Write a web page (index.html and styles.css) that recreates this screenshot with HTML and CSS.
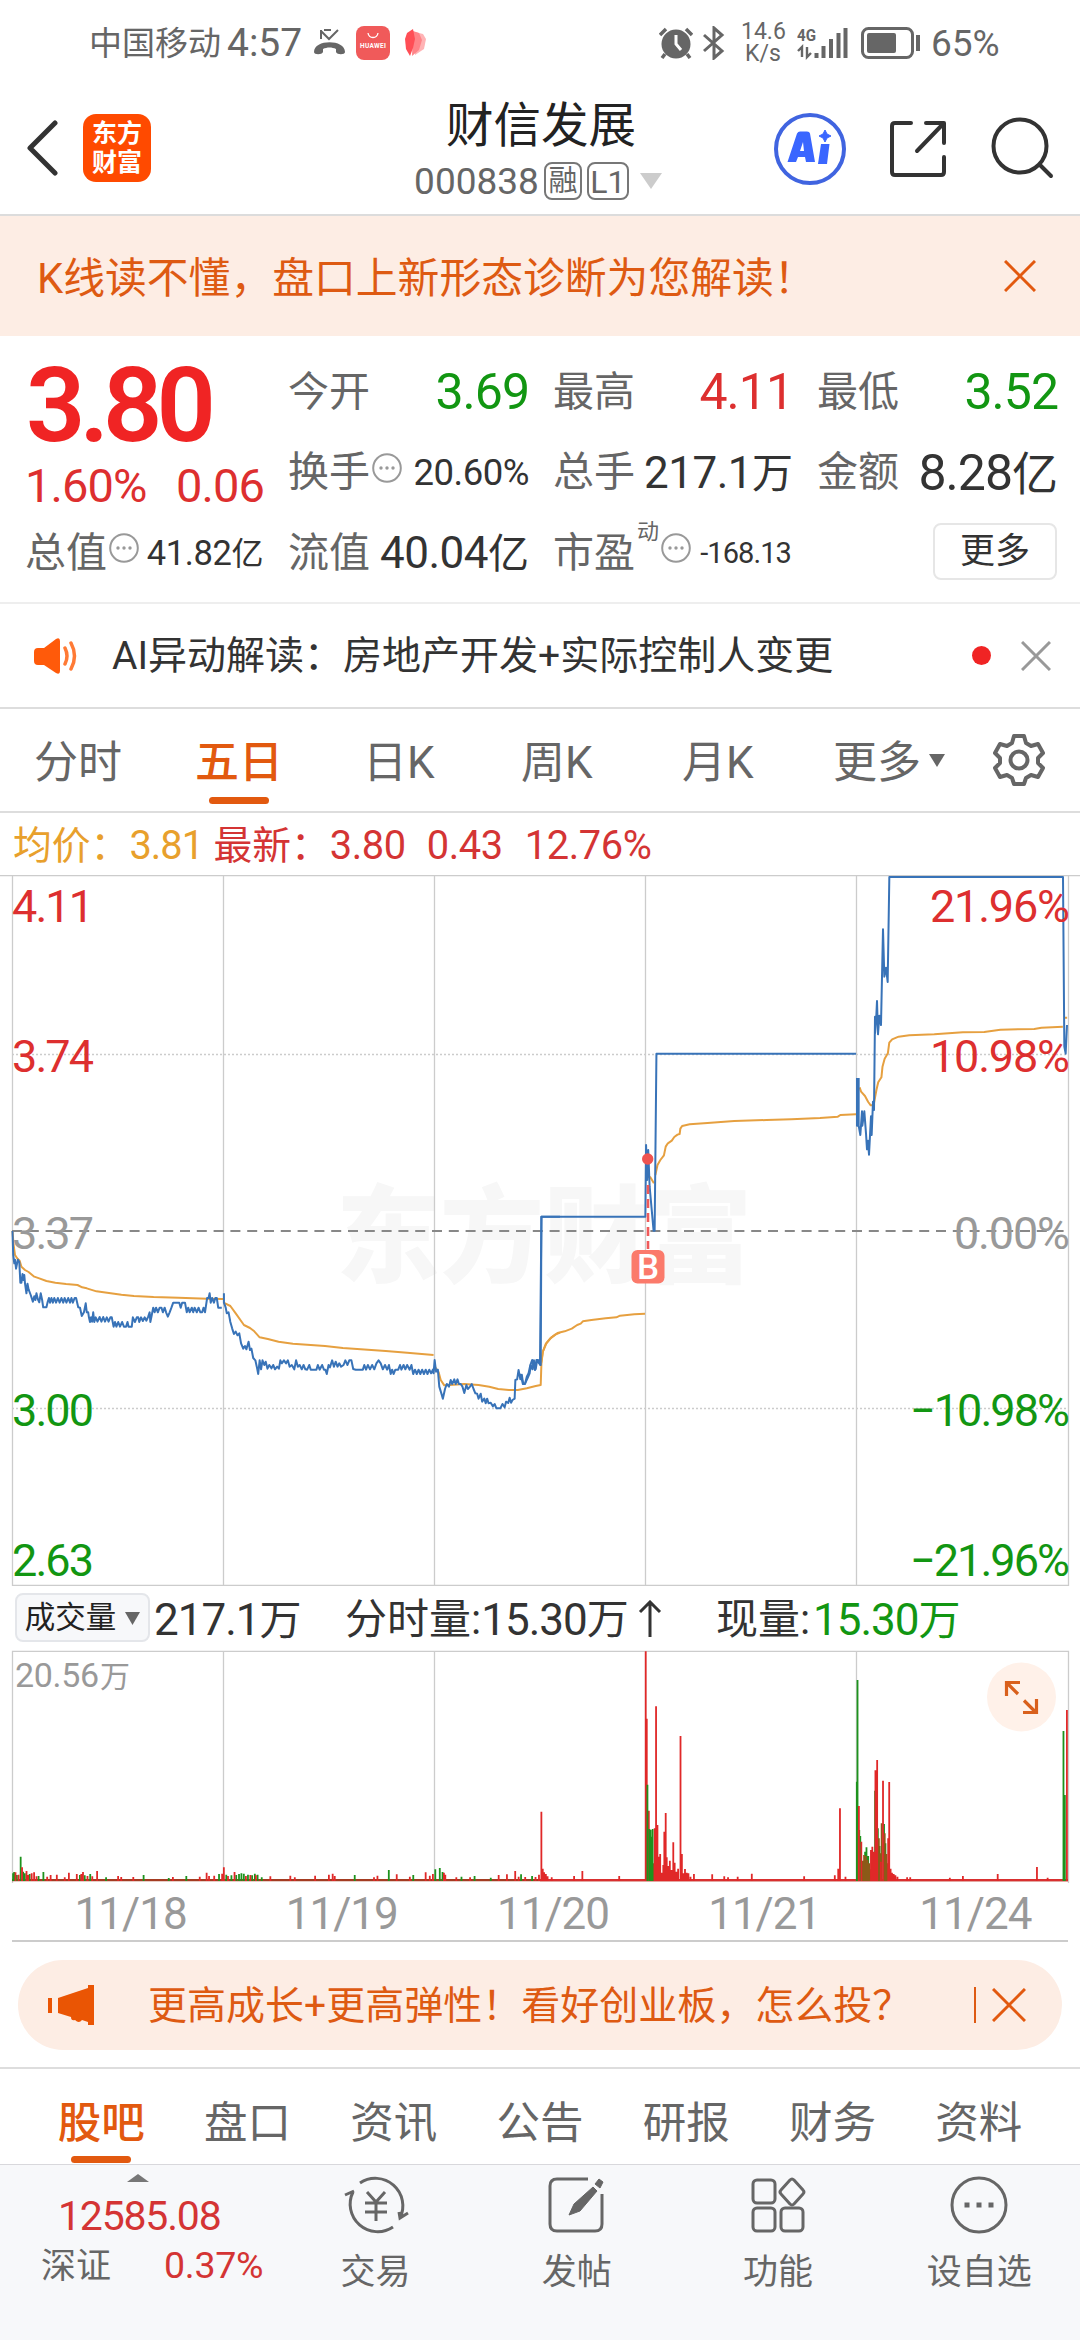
FILE: index.html
```html
<!DOCTYPE html>
<html lang="zh-CN">
<head>
<meta charset="utf-8">
<title>财信发展 000838</title>
<link rel="stylesheet" href="styles.css">
</head>
<body>
<div class="status">
  <span class="carrier">中国移动</span><span class="clock">4:57</span>
  <svg class="st-call" width="34" height="30" viewBox="0 0 34 30" fill="none" stroke="#666"><path d="M8 2v9M8 3l8 8L25 2M11 2h7" stroke-width="2"/><path d="M1 24c0-13 31-13 31 0 0 3-8 3-9 0v-3c-4-2-9-2-13 0v3c-1 3-9 3-9 0z" fill="#666" stroke="none"/></svg>
  <svg class="st-hw" width="34" height="34" viewBox="0 0 34 34"><rect width="34" height="34" rx="8" fill="#f05a5a"/><path d="M12 7c1 6 9 6 10 0" fill="none" stroke="#fff" stroke-width="1.3"/><text x="4" y="22" textLength="26" font-size="6.5" font-weight="700" fill="#fff">HUAWEI</text></svg>
  <svg class="st-petal" width="21" height="28" viewBox="0 0 21 28"><path d="M10 3l8 2 3 5-2 10-9 6z" fill="#ffb3b5"/><path d="M8 2l6 2 3 7-3 10-7 6z" fill="#ff8488"/><path d="M8 0l2 10-2 9-3 8-4-7-1-10 2-6z" fill="#ff4e55"/></svg>
  <span class="grow"></span>
  <svg class="st-alarm" width="34" height="32" viewBox="0 0 34 32"><circle cx="17" cy="17" r="14.5" fill="#666"/><path d="M1 8l6-6M33 8l-6-6M6 27l-3 4M28 27l3 4" stroke="#666" stroke-width="3.5"/><path d="M17 8v9l5 6" fill="none" stroke="#fff" stroke-width="3"/></svg>
  <svg class="st-bt" width="22" height="34" viewBox="0 0 22 34" fill="none" stroke="#666" stroke-width="3"><path d="M1 9l18 16-8 7V2l8 7L1 25"/></svg>
  <span class="speed"><span>14.6</span><span>K/s</span></span>
  <svg class="st-signal" width="52" height="34" viewBox="0 0 52 34"><text x="0" y="15" textLength="19" lengthAdjust="spacingAndGlyphs" font-size="17" font-weight="700" fill="#666">4G</text><path d="M5 31V21L1 25M10 21v10l4-4" fill="none" stroke="#666" stroke-width="2.4"/><path d="M19.500 32v-5M26.500 32V20M34 32V13M41.500 32V7M48.500 32V2" stroke="#666" stroke-width="4"/></svg>
  <svg class="st-batt" width="60" height="32" viewBox="0 0 60 32"><rect x="1.500" y="1.500" width="50" height="29" rx="6" fill="none" stroke="#666" stroke-width="3"/><rect x="6" y="6" width="29" height="20" rx="2" fill="#666"/><path d="M57 8v16" stroke="#666" stroke-width="4"/></svg>
  <span class="pct">65%</span>
</div>

<header class="header">
  <svg class="back" width="33" height="56" viewBox="0 0 33 56" fill="none" stroke="#333" stroke-width="5" stroke-linecap="round" stroke-linejoin="round"><path d="M29 3L4 28l25 25"/></svg>
  <div class="logo">东方<br>财富</div>
  <div class="title">
    <div class="name">财信发展</div>
    <div class="code"><span>000838</span><i class="tag">融</i><i class="tag tag-l">L1</i><svg width="22" height="16" viewBox="0 0 22 16"><path d="M0 0h22L11 16z" fill="#ccc"/></svg></div>
  </div>
  <div class="actions">
    <svg width="72" height="72" viewBox="0 0 72 72"><circle cx="36" cy="36" r="34" fill="none" stroke="#4064e0" stroke-width="4"/><path fill-rule="evenodd" fill="#3a66ff" d="M13.500 49L23 20.500q1-2 3-2h7q2.500 0 3 2L41 49h-9l-1-5h-7l-2 5zM26 38h4l-1-9z"/><path d="M47 31h8.500L53 51h-9z" fill="#3a66ff"/><path d="M51 17l2 4 4 2-4 2-2 4-2-4-4-2 4-2z" fill="#3a66ff" stroke="#3a66ff"/></svg>
    <svg width="58" height="58" viewBox="0 0 58 58" fill="none" stroke="#333" stroke-width="4" stroke-linecap="round" stroke-linejoin="round"><path d="M22 3H6q-3 0-3 3v46q0 3 3 3h46q3 0 3-3V37M37 3h18v20M54 4L28 31"/></svg>
    <svg width="64" height="64" viewBox="0 0 64 64" fill="none" stroke="#333" stroke-width="4" stroke-linecap="round"><circle cx="30" cy="29" r="26.500"/><path d="M50 48l11 11"/></svg>
  </div>
</header>

<div class="banner"><span>K线读不懂，盘口上新形态诊断为您解读！</span><svg width="32" height="32" viewBox="0 0 32 32" stroke="#e2590f" stroke-width="3"><path d="M1 1l30 30M31 1L1 31"/></svg></div>

<section class="quote">
  <div class="cell price">3.80</div>
  <div class="cell"><label>今开</label><b class="xl green">3.69</b></div>
  <div class="cell"><label>最高</label><b class="xl red">4.11</b></div>
  <div class="cell"><label>最低</label><b class="xl green">3.52</b></div>
  <div class="cell change"><b>1.60%</b><b>0.06</b></div>
  <div class="cell"><label>换手<svg class="more" viewBox="0 0 30 30"><use href="#dots"/></svg></label><b class="md">20.60%</b></div>
  <div class="cell"><label>总手</label><b class="lg">217.1<u>万</u></b></div>
  <div class="cell"><label>金额</label><b class="xl">8.28<u>亿</u></b></div>
  <div class="cell"><label>总值<svg class="more" viewBox="0 0 30 30"><g id="dots"><circle cx="15" cy="15" r="13.800" fill="none" stroke="#999" stroke-width="2"/><circle cx="9" cy="15" r="1.700" fill="#999"/><circle cx="15" cy="15" r="1.700" fill="#999"/><circle cx="21" cy="15" r="1.700" fill="#999"/></g></svg></label><b class="sm">41.82<u>亿</u></b></div>
  <div class="cell"><label>流值</label><b class="lg">40.04<u>亿</u></b></div>
  <div class="cell"><label>市盈<sup>动</sup><svg class="more" viewBox="0 0 30 30"><use href="#dots"/></svg></label><b class="xs">-168.13</b></div>
  <div class="cell end"><button>更多</button></div>
</section>

<div class="notice">
  <svg width="44" height="36" viewBox="0 0 44 36"><path d="M4 10h6L22 1q4-2 4 2v30q0 4-4 2L10 27H4q-4 0-4-4v-9q0-4 4-4z" fill="#ff5a0a"/><path d="M31 10q4 8 0 16M37 5q7 13 0 26" fill="none" stroke="#ff7a35" stroke-width="3.500" stroke-linecap="round"/></svg>
  <span class="msg">AI异动解读：房地产开发+实际控制人变更</span><i class="dot"></i>
  <svg width="30" height="30" viewBox="0 0 30 30" stroke="#999" stroke-width="3"><path d="M1 1l28 28M29 1L1 29"/></svg>
</div>

<nav class="periods">
  <a>分时</a><a class="on">五日</a><a>日K</a><a>周K</a><a>月K</a><a>更多<svg width="16" height="13" viewBox="0 0 16 13"><path d="M0 0h16L8 13z" fill="#666"/></svg></a>
  <svg class="gear" width="52" height="54" viewBox="-26 -27 52 54" fill="none" stroke="#666" stroke-width="4" stroke-linejoin="round"><path d="M-5-24H5L7-17 12-14 19-16 24-7 19-2V3L24 8 19 17 12 15 7 18 5 24H-5L-7 18-12 15-19 17-24 8-19 3V-2L-24-7-19-16-12-14-7-17z"/><circle r="8.500"/></svg>
</nav>

<div class="legend"><span class="avg">均价：</span><b class="avg n1">3.81</b><span>最新：</span><b class="n2">3.80</b><b class="n3">0.43</b><b>12.76%</b></div>

<svg class="chart" width="1080" height="711" viewBox="0 875 1080 711">
  <text x="336" y="1274" class="mark" textLength="416" lengthAdjust="spacingAndGlyphs">东方财富</text>
  <g fill="none" stroke="#ccc" stroke-width="1.300">
    <path d="M0 875.700H1080M12.500 876V1585.500H1068.500V876M223.500 876V1585M434.500 876V1585M645.500 876V1585M856.500 876V1585"/>
    <path d="M12 1054.500H1068M12 1408.500H1068" stroke-dasharray="2 2"/>
  </g>
  <path d="M12 1231H1068" stroke="#888" stroke-width="2" stroke-dasharray="10 6.800"/>
  <g fill="none" stroke="#e6a040" stroke-width="2" stroke-linejoin="round">
    <g transform="translate(0 1200) scale(.35714 .33333)"><path vector-effect="non-scaling-stroke" d="M35 93L38 135 42 165 48 175 55 182 60 200 70 210 80 216 96 230 110 235 130 243 155 248 185 252 217 255 230 262 243 265 270 274 300 278 340 284 375 288 430 291 500 293 580 296 625 297M626 308L645 318 660 340 683 375 700 384 712 394 727 412 750 417 780 425 820 431 860 434 910 438 960 444 1010 448 1080 453 1140 458 1214 465M1217 500L1228 516 1234 540 1244 556 1270 554 1300 552 1340 555 1370 560 1395 567 1425 570 1450 570 1475 565 1500 558 1514 555 1516 490 1520 455 1528 432 1540 416 1555 404 1568 398"/></g>
    <g transform="translate(520 1000) scale(.35714 .33333)"><path vector-effect="non-scaling-stroke" d="M59 1090L64 1055 74 1030 88 1012 105 999 125 994 145 986 160 975 170 971 176 964 200 960 240 955 270 952 280 947 320 943 350 941M358 530L365 532 375 550M379 525L385 495 393 480 403 466 408 440 414 430 425 422 432 411 441 404 447 402 449 386 454 378 475 373 525 369 600 363 690 360 760 358 840 354 890 350 897 345 941 343M951 262L955 275 966 288 975 306 982 316 990 316 998 270 1003 247 1012 232 1015 200 1021 176 1030 160 1034 128 1042 118 1060 110 1090 106 1160 103 1240 97 1300 96 1345 89 1440 87 1460 83 1520 80M1523 53H1532"/></g>
  </g>
  <g fill="none" stroke="#3873b8" stroke-width="2" stroke-linejoin="round">
    <g transform="translate(0 1200) scale(.35714 .33333)"><path vector-effect="non-scaling-stroke" d="M35 93L37 165 40 190 42 179 45 206 50 179 54 186 57 248 60 248 63 222 66 240 68 225 70 250 74 280 77 251 80 268 86 285 92 305 96 289 99 300 102 280 106 298 110 307 114 280 118 300 121 322H130L133 308 137 294 140 308 144 294 148 308 152 294 157 308 162 294 167 308 172 294 177 308 181 294 186 308 191 294 196 308 200 294 204 308 209 294 213 294 219 322 224 323 229 348 235 337 240 310 243 337 247 337 249 352 252 366 255 352 258 365 261 337 264 366 268 352 273 365 279 351 284 365 289 351 294 365 299 352 304 365 309 352 313 352 318 380 322 366 326 380 331 366 336 380 342 366 347 380H353L357 366 360 380 369 380 372 352 378 366 383 352 387 352 390 366 395 352 400 363 405 352 410 362 415 350 419 337 421 366 425 345 429 323 433 337 437 323 442 337 447 323 452 323 456 337 461 323 465 337 470 350 475 337 480 323 485 308H502L506 323 510 308H518L523 337 527 323 531 337 537 323 541 337 545 323 551 337 556 323 561 337 566 337 570 323 574 337 580 294 584 294 587 280 590 308 594 294 599 308 603 294 607 294 611 323H621M627 280V308L632 323 635 340 640 337 645 366 650 385 655 402 660 395 665 406 670 400 675 430 681 446 686 438 690 448 696 425 700 450 704 446 709 474 715 481 719 500 723 522 727 481 731 508 735 481 740 495 744 485 749 506 754 495 760 505 765 495 770 508 776 500 781 506 785 481 789 490 795 481 801 490 806 481 811 500 817 495 824 508 829 481 834 500 839 495 845 508 850 495 855 508 860 509 866 495 870 509H886L890 495 895 509 902 495 907 509 911 509 915 522 920 495 924 502 930 481 935 500 940 485 945 500 950 490 955 500 962 495 967 481 973 495 978 481 984 481 989 507 996 509H1016L1020 495 1025 509 1030 495 1036 508 1042 495 1048 508 1054 490 1060 481 1066 490 1072 508 1078 495 1084 509 1089 495 1094 522 1098 509 1102 522 1107 509 1115 509 1120 495 1124 509 1130 495 1135 508 1140 495 1147 509 1152 495 1157 522 1162 509 1167 522 1172 509 1177 522 1182 509 1187 522 1192 509 1197 522 1202 509 1207 520 1212 509 1214 520 1217 480 1221 515 1226 509 1230 560 1236 581 1240 596 1246 567 1251 552 1257 560 1262 540 1266 552 1272 538 1276 552 1281 538 1285 552 1290 552 1295 560 1300 579 1306 555 1310 567 1316 560 1321 552 1326 567 1331 580 1336 581 1340 596 1346 581 1350 605 1356 596 1360 610 1364 596 1368 610 1374 608 1380 619 1385 612 1390 625 1401 625 1407 612 1413 622 1417 605 1423 609 1427 593 1431 608 1435 600 1441 596 1443 540 1448 538 1452 510 1457 538 1461 524 1465 552 1470 551 1477 535 1483 520 1486 495 1491 508 1495 481 1500 507 1504 481 1510 490 1514 495 1516 50H1568"/></g>
    <g transform="translate(520 1000) scale(.35714 .33333)"><path vector-effect="non-scaling-stroke" d="M0 1122L4 1132 8 1152 14 1152 19 1130 24 1120 29 1095 34 1080 38 1100 42 1110 46 1080 51 1080 56 1094 60 650H351L353 435 356 540 359 450 363 560 368 620 374 692H377L382 161H941"/></g>
    <g transform="translate(780 860) scale(.33333)"><path vector-effect="non-scaling-stroke" d="M231 654V797H236V654M236 797L241 825 246 754 247 797 253 754 258 820 261 868 264 842 267 884 273 769 275 825 279 725 282 750 285 470V520L289 467 291 423 294 523 298 467 303 495 309 208 313 350 318 323 323 366 328 51H849L853 560 857 581 861 495"/></g>
  </g>
  <g><path d="M648 1185V1249" stroke="#f05a5a" stroke-width="2.600" stroke-dasharray="9 5"/><circle cx="647.700" cy="1159" r="5.700" fill="#ef5350"/><rect x="631.500" y="1250" width="33" height="33.500" rx="6" fill="#fb7a6b"/><text x="648" y="1279" text-anchor="middle" font-size="35" font-weight="500" fill="#fff">B</text></g>
  <g class="axis">
    <text x="12" y="922" textLength="82" class="r">4.11</text><text x="12" y="1071.500" textLength="82" class="r">3.74</text><text x="12" y="1248.500" textLength="82" class="g">3.37</text><text x="12" y="1425.500" textLength="82" class="d">3.00</text><text x="12" y="1576" textLength="82" class="d">2.63</text>
    <text x="930" y="922" textLength="140" class="r">21.96%</text><text x="930" y="1071.500" textLength="140" class="r">10.98%</text><text x="954" y="1248.500" textLength="116" class="g">0.00%</text><text x="910" y="1425.500" textLength="160" class="d">−10.98%</text><text x="910" y="1576" textLength="160" class="d">−21.96%</text>
  </g>
</svg>

<div class="volbar"><button class="pick">成交量<svg width="15" height="13" viewBox="0 0 15 13"><path d="M0 0h15L7.500 13z" fill="#666"/></svg></button><b class="v1">217.1<u>万</u></b><span class="v2">分时量:<b>15.30</b>万<svg width="24" height="38" viewBox="0 0 24 38" fill="none" stroke="#333" stroke-width="3"><path d="M12 37V2M2 12L12 2l10 10"/></svg></span><span class="v3">现量:</span><b class="green v4">15.30<u>万</u></b></div>

<svg class="chart" width="1080" height="234" viewBox="0 1650 1080 234">
  <path d="M12.500 1883V1651.300H1068.500V1883M223.500 1651V1881M434.500 1651V1881M645.500 1651V1881M856.500 1651V1881" fill="none" stroke="#ccc" stroke-width="1.300"/>
  <g class="axis g"><text x="15" y="1687" textLength="84" class="vmax">20.56</text><text x="100" y="1687" class="vmaxu">万</text></g>
  <path d="M12 1880.200H1068" stroke="#a33c22" stroke-width="2.200"/><path d="M540 1880.200H1068" stroke="#d83030" stroke-width="2.200"/>
  <g stroke-width="1.800">
    <g transform="translate(0 1580) scale(.34439 .33333)">
      <path class="dn" vector-effect="non-scaling-stroke" d="M38 903V880M41 903V876M49 903V885M60 903V830M67 903V875M72 903V880M86 903V882M112 903V888M126 903V876M232 903V885M246 903V886M262 903V882M308 903V892M417 903V885M490 903V894M541 903V888M636 903V882M657 903V884M672 903V886M686 903V885M694 903V882M701 903V880M708 903V881M720 903V884M732 903V886M740 903V881M748 903V884M760 903V892M1030 903V885M1129 903V870M1200 903V885M1264 903V868M1277 903V864M1285 903V876M1340 903V890M1378 903V888M1425 903V893M1513 903V883M1545 903V888"/>
      <path class="up" vector-effect="non-scaling-stroke" d="M45 903V877M54 903V884M64 903V862M77 903V873M82 903V885M92 903V880M99 903V877M106 903V889M137 903V890M147 903V885M165 903V884M188 903V892M200 903V878M223 903V882M236 903V882M241 903V876M254 903V888M268 903V889M282 903V873M343 903V888M352 903V891M387 903V891M502 903V891M580 903V890M600 903V878M607 903V888M622 903V887M645 903V881M650 903V862M662 903V888M681 903V876M714 903V888M727 903V885M743 903V886M785 903V889M843 903V887M856 903V892M915 903V887M955 903V884M966 903V881M972 903V888M1086 903V892M1096 903V887M1152 903V883M1190 903V890M1236 903V877M1248 903V887M1257 903V882M1289 903V878M1293 903V884M1325 903V892M1365 903V892M1448 903V885M1472 903V883M1496 903V873M1506 903V890M1525 903V891M1555 903V891M1565 903V884"/>
    </g>
    <g transform="translate(540 1580) scale(.34439 .33333)">
      <path class="up" vector-effect="non-scaling-stroke" d="M4 903V695M8 903V866M12 903V877M17 903V882M22 903V889M34 903V892M99 903V888M123 903V873M230 903V888M307 903V214M310 903V416M316 903V692M330 903V850M333 903V745M337 903V379M341 903V735M345 903V830M349 903V822M354 903V878M358 903V855M361 903V755M365 903V699M368 903V832M373 903V858M377 903V842M382 903V870M387 903V787M391 903V848M396 903V875M401 903V866M408 903V468M412 903V822M416 903V880M421 903V867M426 903V878M431 903V880M437 903V890M447 903V882M500 903V883M535 903V889M546 903V892M574 903V890M615 903V881M767 903V889M856 903V886M866 903V866M871 903V685M887 903V890"/>
      <path class="dn" vector-effect="non-scaling-stroke" d="M312 903V614M318 903V747M321 903V750M324 903V770M327 903V747M920 903V605M922 903V300M927 903V750M930 903V768M944 903V815M948 903V802M953 903V828M973 903V632M981 903V745M986 903V798M999 903V732M1003 903V790M1520 903V453M1524 903V645"/>
      <path class="mix" vector-effect="non-scaling-stroke" d="M925 903V750M936 903V842M941 903V825M946 903V828M951 903V840M956 903V850M961 903V868M965 903V855M976 903V760M984 903V775M988 903V820M992 903V730M1001 903V760M1006 903V822M1009 903V850"/>
      <path class="up" vector-effect="non-scaling-stroke" d="M926 903V678M933 903V785M961 903V810M965 903V800M969 903V815M974 903V571M979 903V540M990 903V845M996 903V602M1011 903V775M1014 903V606M1018 903V866M1022 903V878M1027 903V882M1032 903V886M1038 903V890M1066 903V892M1075 903V892M1190 903V893M1228 903V888M1329 903V882M1443 903V861M1474 903V893M1530 903V390"/>
    </g>
  </g>
  <circle cx="1021.500" cy="1697" r="34.500" fill="#fff1e9"/><path d="M1006.500 1696V1682.500H1020M1007 1683L1018 1694M1024 1700.500L1036 1712.500M1023 1712.500H1036.500V1699" fill="none" stroke="#d9601c" stroke-width="3.200"/>
</svg>

<div class="dates"><span>11/18</span><span>11/19</span><span>11/20</span><span>11/21</span><span>11/24</span></div>

<div class="promo">
  <svg width="46" height="40" viewBox="0 0 46 40"><path d="M0 13h4v15H0zM10 13L40 3V0h6v40h-6v-3l-6-2q-3 4-7 0-4 1-4-3l-13-4z" fill="#ea5504"/></svg>
  <span>更高成长+更高弹性！看好创业板，怎么投？</span><i></i>
  <svg width="34" height="34" viewBox="0 0 34 34" stroke="#e2590f" stroke-width="3"><path d="M1 1l32 32M33 1L1 33"/></svg>
</div>

<nav class="sections"><a class="on">股吧</a><a>盘口</a><a>资讯</a><a>公告</a><a>研报</a><a>财务</a><a>资料</a></nav>

<footer class="footer">
  <div class="index"><svg width="22" height="8" viewBox="0 0 22 8"><path d="M11 0l11 8H0z" fill="#777"/></svg><b class="pts">12585.08</b><div><span>深证</span><b>0.37%</b></div></div>
  <a><svg viewBox="0 0 66 58"><path d="M17 7A27.500 27.500 0 0 1 57 42M50 51A27.500 27.500 0 0 1 10 16M2 19l9-4M65 37l-8 5-1-6M24 16l9 10 9-10M33 26v19M22 27h22M22 36h22"/></svg>交易</a>
  <a><svg viewBox="0 0 66 58"><path d="M44 3H13q-7 0-7 7v38q0 7 7 7h38q7 0 7-7V18" /><path d="M55 3l4 3-3 6-5-4zM49 11l4 4-17 20-11 4 5-11z" fill="#666" stroke-width="1"/></svg>发帖</a>
  <a><svg viewBox="0 0 66 58"><rect x="8" y="4" width="22" height="23" rx="4"/><rect x="8" y="32" width="22" height="23" rx="4"/><rect x="36" y="32" width="22" height="23" rx="4"/><path d="M45 4q2-2 4 0l9 10q2 2 0 4l-9 10q-2 2-4 0l-9-10q-2-2 0-4z"/></svg>功能</a>
  <a><svg viewBox="0 0 66 58"><circle cx="33" cy="29" r="27"/><path d="M21 26.500v5M33 26.500v5M45 26.500v5" stroke-width="5"/></svg>设自选</a>
</footer>
</body>
</html>
```
FILE: styles.css
```css
* { box-sizing: border-box; }
body {
  margin: 0;
  width: 1080px;
  height: 2340px;
  overflow: hidden;
  display: flex;
  flex-direction: column;
  background: #fff;
  color: #333;
  font-family: Roboto, "Noto Sans CJK SC", sans-serif;
  line-height: 1;
  white-space: nowrap;
}
body > * { flex-shrink: 0; }
b { font-weight: 400; }
i { font-style: normal; }
u { text-decoration: none; }
svg { display: block; flex-shrink: 0; }
button { font: inherit; color: inherit; background: none; padding: 0; }
.green { color: #129612; }
.red { color: #dd2f2f; }
.grow { flex: 1; }

.status { height: 85px; padding: 0 80px 0 89px; display: flex; align-items: center; color: #666; }
.carrier { font-size: 33px; padding-top: 2px; }
.clock { font-size: 39px; margin-left: 6px; padding-top: 2px; }
.st-call { margin-left: 11px; }
.st-hw { margin-left: 9px; }
.st-petal { margin-left: 15px; }
.st-alarm { margin-right: 10px; }
.st-bt { margin-right: 16px; }
.speed { width: 44px; display: flex; flex-direction: column; font-size: 23px; line-height: 22px; text-align: center; }
.st-signal { margin-left: 12px; }
.st-batt { margin-left: 12px; }
.pct { width: 69px; margin-left: 10px; font-size: 37px; padding-top: 2px; }

.header { height: 131px; border-bottom: 2px solid #dcdcdc; display: flex; align-items: center; padding: 0 26px; }
.back { margin-top: -3px; }
.logo { width: 68px; height: 68px; margin: -3px 0 0 24px; padding-top: 5px; border-radius: 13px; background: #ff4a00; color: #fff; font-size: 25px; font-weight: 700; line-height: 29px; text-align: center; }
.title { flex: 1; margin: 5px 0 0 262px; display: flex; flex-direction: column; align-items: center; }
.name { font-size: 47.500px; color: #222; margin-left: 6px; }
.code { display: flex; align-items: center; height: 40px; margin-top: 10px; font-size: 37px; color: #666; }
.code span { padding-top: 2px; }
.tag { width: 38px; height: 38px; margin-left: 5px; border: 2px solid #777; border-radius: 8px; font-size: 29px; line-height: 34px; text-align: center; }
.tag-l { width: 42px; font-size: 32px; line-height: 36px; }
.code svg { margin-left: 11px; }
.actions { display: flex; align-items: center; gap: 43px; margin: -2px 0 0 111px; }

.banner { height: 120px; padding: 0 44px 0 37px; display: flex; align-items: center; justify-content: space-between; background: #fdede4; color: #de5a12; font-size: 41.800px; }
.banner span { padding-top: 5px; }

.quote { height: 268px; padding: 16px 25px 0 26px; border-bottom: 2px solid #eee; display: grid; grid-template-columns: 236px 238px 237px 238px; column-gap: 27px; grid-template-rows: repeat(3, 80.500px); }
.cell { display: flex; align-items: center; justify-content: space-between; }
.cell label { display: flex; align-items: center; font-size: 41px; color: #666; margin-left: -1px; }
.cell b { margin-right: -2px; }
.price { color: #f02424; font-size: 104px; font-weight: 600; letter-spacing: -6px; line-height: 80px; padding-top: 28px; }
.change { color: #dd2f2f; font-size: 47px; letter-spacing: -.900px; padding-top: 26px; }
.change b:first-child { margin-left: -1px; }
.more { width: 30px; height: 30px; margin: -10px 0 0 2px; }
.xl { font-size: 50px; letter-spacing: -1px; }
.xl u { font-size: 46px; letter-spacing: 0; }
.lg { font-size: 44px; letter-spacing: -.5px; }
.lg u { font-size: 41px; letter-spacing: 0; }
.md { font-size: 36.500px; letter-spacing: -.5px; }
.cell .sm { font-size: 34.500px; letter-spacing: -.4px; margin-right: -1px; }
.sm u { font-size: 32px; }
.cell .xs { font-size: 29px; letter-spacing: -.9px; margin-right: 0; }
.cell sup { font-size: 22px; line-height: 22px; margin: -42px 0 0 2px; vertical-align: baseline; }
.cell.end { justify-content: flex-end; }
.cell button { width: 124px; height: 57px; margin: -3px -1px 0 0; border: 2px solid #e6e6e6; border-radius: 8px; font-size: 35px; }

.notice { height: 105px; border-bottom: 2px solid #ddd; padding: 0 29px 0 34px; display: flex; align-items: center; }
.msg { font-size: 39px; flex: 1; margin-left: 34px; padding-top: 2px; }
.dot { width: 19px; height: 19px; border-radius: 50%; background: #f02424; margin-right: 30px; }

.periods { height: 104px; border-bottom: 2px solid #ddd; padding-left: 34px; display: grid; grid-template-columns: 161px 168px 158px 161px 151px 160px 52px; align-items: center; justify-items: start; color: #666; font-size: 44px; }
.periods a, .sections a { position: relative; display: flex; align-items: center; height: 100%; }
.periods a { padding-top: 5px; }
.periods a svg { margin: -5px 0 0 8px; }
.on { color: #e2590f; font-weight: 500; }
.on::after { content: ""; position: absolute; left: 50%; bottom: 7px; width: 60px; height: 7px; margin-left: -30px; border-radius: 4px; background: #e2590f; }

.legend { height: 62px; padding: 4px 0 0 13px; display: flex; align-items: center; color: #d43434; font-size: 38.800px; }
.legend b { font-size: 39.800px; letter-spacing: -.4px; }
.legend .n1 { width: 84px; letter-spacing: -1px; }
.avg { color: #e8a02c; }
.n2 { width: 97px; }
.n3 { width: 98px; }

.chart text { font-family: Roboto, "Noto Sans CJK SC", sans-serif; }
.chart .mark { font-size: 106px; font-weight: 800; fill: #f7f7f7; }
.axis { font-size: 45px; }
.r { fill: #dd2f2f; }
.g { fill: #999; }
.d { fill: #129612; }
.vmax { font-size: 34px; }
.vmaxu { font-size: 30px; }
.up { stroke: #e02828; }
.dn { stroke: #1d921d; }
.mix { stroke: #8b5a18; }

.volbar { height: 64px; padding: 4px 0 0 15px; display: flex; align-items: center; font-size: 42px; }
.volbar b { font-size: 44px; letter-spacing: -1px; }
.volbar u { font-size: 42px; letter-spacing: 0; }
.volbar .pick { width: 135px; height: 49px; margin-top: -5px; padding-top: 1px; border: 2px solid #e4e6ea; border-radius: 8px; background: #f7f8fa; font-size: 30.500px; display: flex; align-items: center; justify-content: center; gap: 9px; color: #222; }
.v1 { width: 191px; margin-left: 4px; }
.v2 { width: 371px; display: flex; align-items: center; }
.v2 svg { margin: -3px 0 0 9px; }
.v3 { width: 97px; }

.dates { height: 58px; margin: 0 12px; padding-top: 3px; border-bottom: 2px solid #ccc; display: grid; grid-template-columns: repeat(5, 1fr); align-items: center; text-align: center; color: #999; font-size: 44px; letter-spacing: -1px; }
.dates span { padding-left: 26px; }

.promo { height: 90px; margin: 18px 18px 17px; padding: 0 36px 0 30px; border-radius: 45px; background: #fdede4; display: flex; align-items: center; color: #de5a12; font-size: 39px; }
.promo span { flex: 1; margin-left: 54px; padding-top: 2px; }
.promo i { width: 2px; height: 36px; background: #de5a12; margin-right: 16px; }

.sections { height: 98px; padding: 0 28px; border-top: 2px solid #ddd; border-bottom: 1px solid #d8d8dc; display: grid; grid-template-columns: repeat(7, 1fr); justify-items: center; color: #666; font-size: 43.500px; }
.sections a { padding-top: 15px; }
.sections .on::after { bottom: 1px; }

.footer { flex: 1; display: grid; grid-template-columns: 275px repeat(4, 1fr); background: #f7f8fa; color: #666; font-size: 35px; align-items: start; }
.footer a { display: flex; flex-direction: column; align-items: center; gap: 21px; padding-top: 11px; }
.footer a svg { width: 66px; height: 58px; fill: none; stroke: #666; stroke-width: 3; overflow: visible; }
.index { padding-top: 9px; }
.index svg { margin-left: 127px; }
.index b { color: #d43434; }
.pts { display: block; margin: 14px 0 0 58px; font-size: 41px; letter-spacing: -1.200px; }
.index div { display: flex; align-items: center; margin: 11px 0 0 41px; height: 36px; }
.index div b { font-size: 37.500px; margin-left: 53px; letter-spacing: -.3px; }
```
